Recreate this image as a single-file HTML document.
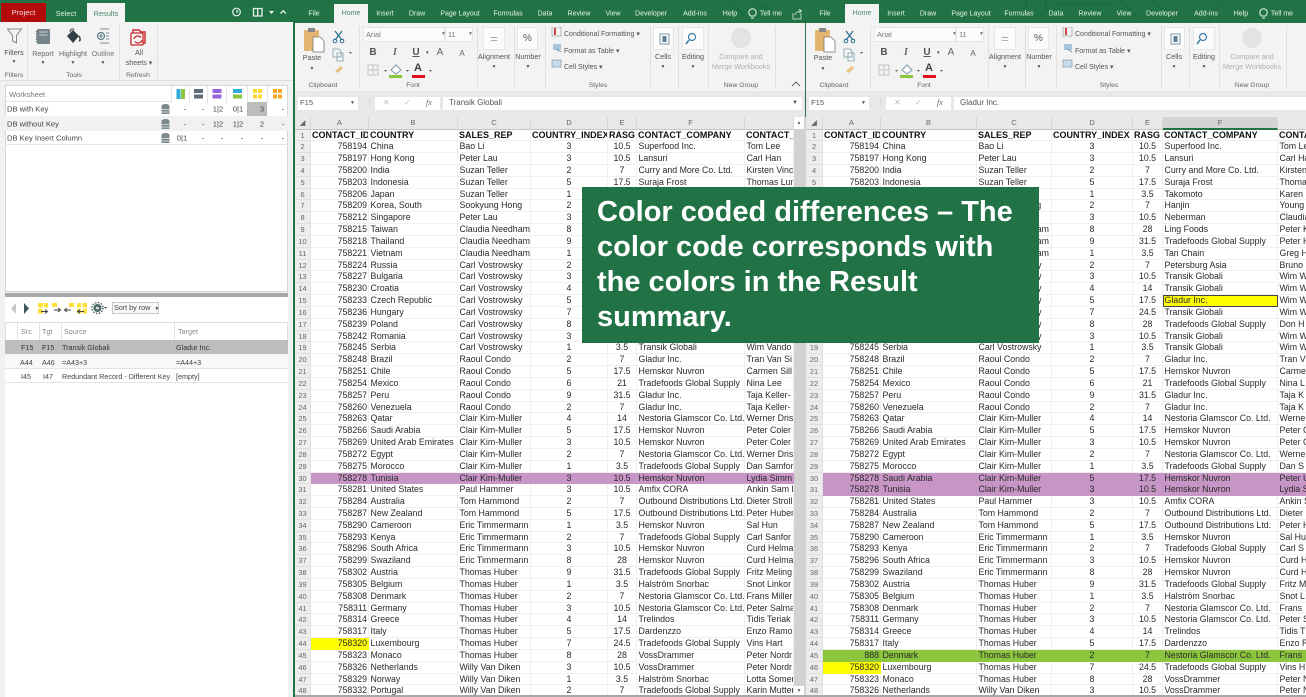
<!DOCTYPE html>
<html><head><meta charset="utf-8"><title>Compare</title>
<style>
*{box-sizing:border-box;margin:0;padding:0}
html,body{width:1306px;height:697px;overflow:hidden;background:#fff;font-family:"Liberation Sans",sans-serif;color:#333}
body{filter:blur(.35px)}
.a{position:absolute;white-space:nowrap}
.c{transform:translateX(-50%)}
#left{position:absolute;left:0;top:0;width:295px;height:697px;background:#f1f1f1;overflow:hidden;border-right:2px solid #217346}
.pane{position:absolute;top:0;height:697px;overflow:hidden;background:#e8e8e8}
.tabs{position:absolute;left:0;top:0;width:100%;height:23px;background:#217346}
.tab{position:absolute;top:14px;transform:translate(-50%,-50%);font-size:7px;color:#e6f2ea;white-space:nowrap}
.rib{position:absolute;left:0;top:23px;width:100%;height:68px;background:#f3f3f3}
.sep{position:absolute;width:1px;background:#e0e0e0}
.lbl{position:absolute;font-size:6.8px;color:#666;transform:translateX(-50%);white-space:nowrap}
.t7{position:absolute;font-size:7.2px;color:#555;transform:translateX(-50%);white-space:nowrap;line-height:10px;text-align:center}
.box{position:absolute;background:#fbfbfb;border:1px solid #e6e6e6}
.grid{position:absolute;left:0;top:117px}
.hd{display:flex;height:12.5px;background:#e8e8e8}
.hd i{font-style:normal;font-size:7.4px;color:#666;text-align:center;border-right:1px solid #d8d8d8;line-height:12px;border-bottom:1px solid #c4c4c4;flex:none}
.r{display:flex;height:11.83px;background:#fff}
.r i{font-style:normal;flex:none;font-size:8.8px;line-height:11.6px;overflow:hidden;white-space:nowrap;color:#2a2a2a;padding-left:1.5px;border-right:1px solid #f0f0f0;border-bottom:1px solid #f0f0f0}
.r i:nth-child(1){font-size:7.4px;color:#666;text-align:center;background:#ededed;border-color:#e0e0e0;padding:0}
.r i:nth-child(2){text-align:right;padding-right:1px;padding-left:0}
.r i:nth-child(5),.r i:nth-child(6){text-align:center;padding:0}
.h i:nth-child(n+2){font-weight:bold;color:#111;overflow:hidden;font-size:9px;text-align:left!important;padding-left:1px!important}
.p i:nth-child(n+2){background:#c795c6;border-color:#c795c6}
.g i:nth-child(n+2){background:#8cc63e;border-color:#8cc63e}
.r i.y{background:#ffff00;border-color:#ffff00}
.r i.ys{background:#ffff00;outline:1px solid #444;outline-offset:-1px}
#L .hd i:nth-child(1),#L .r i:nth-child(1){width:16px}
#L .hd i:nth-child(2),#L .r i:nth-child(2){width:58px}
#L .hd i:nth-child(3),#L .r i:nth-child(3){width:89px}
#L .hd i:nth-child(4),#L .r i:nth-child(4){width:73px}
#L .hd i:nth-child(5),#L .r i:nth-child(5){width:77px}
#L .hd i:nth-child(6),#L .r i:nth-child(6){width:29px}
#L .hd i:nth-child(7),#L .r i:nth-child(7){width:108px}
#L .hd i:nth-child(8),#L .r i:nth-child(8){width:49px}
#R .hd i:nth-child(1),#R .r i:nth-child(1){width:17px}
#R .hd i:nth-child(2),#R .r i:nth-child(2){width:58px}
#R .hd i:nth-child(3),#R .r i:nth-child(3){width:96px}
#R .hd i:nth-child(4),#R .r i:nth-child(4){width:75px}
#R .hd i:nth-child(5),#R .r i:nth-child(5){width:81px}
#R .hd i:nth-child(6),#R .r i:nth-child(6){width:30px}
#R .hd i:nth-child(7),#R .r i:nth-child(7){width:115px}
#R .hd i:nth-child(8),#R .r i:nth-child(8){width:40px}
#R .hd i.sel{background:#d4d4d4;border-bottom:2px solid #217346}
#banner{position:absolute;left:582px;top:187px;width:457px;height:156px;background:#217346;color:#fff;font-weight:bold;font-size:29px;line-height:35px;padding:8px 0 0 15px}
.wr{position:absolute;left:5px;width:283px;font-size:7.6px;color:#444}
.wr span{position:absolute;top:50%;transform:translate(-50%,-50%);white-space:nowrap}
.wr span.l{transform:translateY(-50%)}
.tl{position:absolute;font-size:7.2px;white-space:nowrap}
</style></head><body>

<div id="left">
<div class="a" style="left:0;top:0;width:295px;height:22px;background:#217346"></div>
<div class="a" style="left:1px;top:3px;width:45px;height:19px;background:#b30b0b;color:#f5dede;font-size:7.6px;text-align:center;line-height:20px">Project</div>
<div class="a c" style="left:66px;top:9px;font-size:7.4px;color:#dfeee5">Select</div>
<div class="a" style="left:87px;top:3px;width:38px;height:20px;background:#f3f3f3;color:#4a8a68;font-size:7.4px;text-align:center;line-height:21px">Results</div>
<svg class="a" style="left:228px;top:4px" width="66" height="16" fill="none" stroke="#e8f3ec"><circle cx="8.500" cy="8" r="3.800" stroke-width="1.200"/><path d="M8 6.500h1.500v1.500H8.500v1" stroke-width=".8"/><path d="M25.500 4.500h8.500v7.500h-8.500zM29.700 4.500v7.500" stroke-width="1.300"/><path d="M42 7.500h3l-1.500 1.700z" fill="#e8f3ec"/><path d="M52.500 9.500l2.700-2.700 2.700 2.700" stroke-width="1.300"/></svg>
<div class="a" style="left:0;top:22px;width:293px;height:59px;background:#f3f3f3;border-bottom:1px solid #ddd"></div>
<div class="sep" style="left:27px;top:24px;height:55px"></div>
<div class="sep" style="left:119px;top:24px;height:55px"></div>
<div class="sep" style="left:157px;top:24px;height:55px"></div>
<svg class="a" style="left:0;top:24px" width="160" height="24" fill="none">
<path d="M7.500 5h14l-5 6.500v7.500l-4-2v-5.500z" stroke="#7c8a8a" stroke-width="1"/>
<rect x="37" y="5" width="13" height="15" rx="1" fill="#75838a"/><path d="M39.500 8h8M39.500 11h8" stroke="#cdd5d8" stroke-width="1"/><path d="M36.500 7v11" stroke="#4d5b60" stroke-width="1" stroke-dasharray="1.500 1"/>
<path d="M67 12l6-6 6 6-6 7z" fill="#333f45"/><path d="M70 8c0-3 3-4 4-2" stroke="#333f45"/><path d="M79 12c1.500 2 1.500 5 0 5" stroke="#333f45" stroke-width="1.400"/>
<circle cx="101" cy="12" r="3.500" stroke="#5d7a85" stroke-width="1.200"/><path d="M101 10v4M99 12h4" stroke="#5d7a85"/><path d="M100 5h9M106 9h3M106 12h3M106 15h3M100 19h9" stroke="#7b8c92" stroke-width="1"/>
<path d="M133 6h6l2 2h4v11h-12z" stroke="#c8282d" stroke-width="1.400"/><rect x="131" y="9" width="12" height="12" rx="1" stroke="#c8282d" stroke-width="1.300" fill="#f6f6f6"/><path d="M134 15a4 4 0 0 1 7-1.500M142 16a4 4 0 0 1-7 1.500" stroke="#c8282d" stroke-width="1.300"/>
</svg>
<div class="t7" style="left:14px;top:48px;color:#555">Filters</div>
<div class="t7" style="left:43px;top:49px;color:#666">Report</div>
<div class="t7" style="left:73px;top:49px;color:#666">Highlight</div>
<div class="t7" style="left:103px;top:49px;color:#777">Outline</div>
<div class="t7" style="left:139px;top:48px;color:#555;line-height:10px">All<br>sheets ▾</div>
<div class="t7" style="left:14px;top:57px;font-size:5px">▼</div>
<div class="t7" style="left:43px;top:58px;font-size:5px">▼</div>
<div class="t7" style="left:73px;top:58px;font-size:5px">▼</div>
<div class="t7" style="left:103px;top:58px;font-size:5px">▼</div>
<div class="lbl" style="left:14px;top:72px">Filters</div>
<div class="lbl" style="left:74px;top:72px">Tools</div>
<div class="lbl" style="left:138px;top:72px">Refresh</div>

<div class="a" style="left:5px;top:85px;width:283px;height:207px;background:#fff;border:1px solid #d6d6d6"></div>
<div class="a" style="left:6px;top:86px;width:166px;height:16px;border-bottom:1px solid #e4e4e4"></div>
<div class="a" style="left:9px;top:90px;font-size:7.6px;color:#777">Worksheet</div>
<svg class="a" style="left:171px;top:86px" width="118" height="17">
<rect x="5.500" y="3" width="4" height="10" fill="#2eaadc"/><rect x="10" y="3" width="4" height="10" fill="#8cc63e"/>
<rect x="23" y="3" width="9" height="4" fill="#5c6b75"/><rect x="23" y="8.500" width="9" height="4" fill="#5c6b75"/>
<rect x="41.500" y="3" width="9" height="4" fill="#9466d8"/><rect x="41.500" y="8.500" width="9" height="4" fill="#9466d8"/>
<rect x="62" y="3" width="9" height="4" fill="#2eaadc"/><rect x="62" y="8.500" width="9" height="4" fill="#8cc63e"/>
<rect x="82" y="3" width="4" height="4" fill="#fdd835"/><rect x="87" y="3" width="4" height="4" fill="#fdd835"/><rect x="82" y="8.500" width="4" height="4" fill="#fdd835"/><rect x="87" y="8.500" width="4" height="4" fill="#fdd835"/>
<rect x="102" y="3" width="4" height="4" fill="#f5a623"/><rect x="107" y="3" width="4" height="4" fill="#f5a623"/><rect x="102" y="8.500" width="4" height="4" fill="#f5a623"/><rect x="107" y="8.500" width="4" height="4" fill="#f5a623"/>
<path d="M.5 0v17M18.500 0v17M36.500 0v17M55.500 0v17M76.500 0v17M96.500 0v17" stroke="#e6e6e6"/></svg>

<div class="wr" style="top:102px;height:14px"><div class="a" style="left:242px;top:0;width:20px;height:14px;background:#bdbdbd"></div><span class="l" style="left:2px">DB with Key</span><span style="left:180px">-</span><span style="left:198px">-</span><span style="left:213px">1|2</span><span style="left:233px">0|1</span><span style="left:257px">3</span><span style="left:278px">-</span></div>
<div class="wr" style="top:116px;height:15px;background:#f1f1f1"><span class="l" style="left:2px">DB without Key</span><span style="left:180px">-</span><span style="left:198px">-</span><span style="left:213px">1|2</span><span style="left:233px">1|2</span><span style="left:257px">2</span><span style="left:278px">-</span></div>
<div class="wr" style="top:131px;height:14px;border-bottom:1px solid #e6e6e6"><span class="l" style="left:2px">DB Key Insert Column</span><span style="left:177px">0|1</span><span style="left:198px">-</span><span style="left:217px">-</span><span style="left:237px">-</span><span style="left:257px">-</span><span style="left:278px">-</span></div>
<svg class="a" style="left:160px;top:103px" width="12" height="42" fill="#7c8a90"><ellipse cx="5.500" cy="3" rx="4" ry="2"/><rect x="1.500" y="3" width="8" height="8" /><path d="M1.500 6.500h8M1.500 9h8" stroke="#dfe3e5" stroke-width=".7"/><ellipse cx="5.500" cy="18" rx="4" ry="2"/><rect x="1.500" y="18" width="8" height="8"/><path d="M1.500 21.500h8M1.500 24h8" stroke="#dfe3e5" stroke-width=".7"/><ellipse cx="5.500" cy="32" rx="4" ry="2"/><rect x="1.500" y="32" width="8" height="8"/><path d="M1.500 35.500h8M1.500 38h8" stroke="#dfe3e5" stroke-width=".7"/></svg>

<div class="a" style="left:5px;top:293px;width:283px;height:4px;background:#a8a8a8"></div>
<div class="a" style="left:5px;top:297px;width:283px;height:400px;background:#fff"></div>
<svg class="a" style="left:8px;top:300px" width="84" height="16">
<path d="M8 3v11l-5-5.500z" fill="#c4c9cb"/><path d="M16 3v11l5-5.500z" fill="#3d5660"/>
<rect x="30" y="3" width="5" height="4.500" fill="#fde03a"/><rect x="30" y="9" width="5" height="4.500" fill="#fde03a"/><rect x="36" y="3" width="4" height="4.500" fill="#fde03a"/><path d="M33 11.500h6M37 9.500l2.500 2-2.500 2" stroke="#444" fill="none"/>
<rect x="44" y="3" width="5" height="4" fill="#fde03a"/><path d="M46 10h6M50 8l2.500 2-2.500 2" stroke="#444" fill="none"/>
<rect x="61" y="3" width="5" height="4" fill="#fde03a"/><path d="M57 10h6M59 8l-2.500 2 2.500 2" stroke="#444" fill="none"/>
<rect x="69" y="3" width="4" height="4.500" fill="#fde03a"/><rect x="69" y="9" width="4" height="4.500" fill="#fde03a"/><rect x="74.500" y="3" width="4.500" height="4.500" fill="#fde03a"/><rect x="74.500" y="9" width="4.500" height="4.500" fill="#fde03a"/><path d="M70 11.500h6M72 9.500l-2.500 2 2.500 2" stroke="#444" fill="none"/></svg>
<svg class="a" style="left:91px;top:300px" width="18" height="16"><circle cx="6.500" cy="8" r="4" fill="#4d6b66"/><circle cx="6.500" cy="8" r="5.500" fill="none" stroke="#4d6b66" stroke-width="1.500" stroke-dasharray="1.500 1.400"/><circle cx="6.500" cy="8" r="1.300" fill="#fff"/><path d="M13 7h3l-1.500 1.700z" fill="#444"/></svg>
<div class="a" style="left:112px;top:302px;width:47px;height:12px;border:1px solid #c9c9c9;background:#f8f8f8;font-size:7.2px;line-height:10px;padding-left:1px;color:#444">Sort by row <span style="font-size:5px;margin-left:2px">▼</span></div>

<div class="a" style="left:5px;top:322px;width:283px;height:18px;border:1px solid #dcdcdc;border-bottom:0"></div>
<div class="sep" style="left:17px;top:323px;height:17px"></div>
<div class="sep" style="left:39px;top:323px;height:17px"></div>
<div class="sep" style="left:61px;top:323px;height:17px"></div>
<div class="sep" style="left:174px;top:323px;height:17px"></div>
<div class="tl" style="left:21px;top:327px;color:#888">Src</div>
<div class="tl" style="left:42px;top:327px;color:#888">Tgt</div>
<div class="tl" style="left:64px;top:327px;color:#888">Source</div>
<div class="tl" style="left:178px;top:327px;color:#888">Target</div>
<div class="a" style="left:5px;top:340px;width:283px;height:14px;background:#bdbdbd"></div>
<div class="a" style="left:5px;top:354px;width:283px;height:15px;background:#f8f8f8;border-bottom:1px solid #e4e4e4"></div>
<div class="a" style="left:5px;top:369px;width:283px;height:14px;border-bottom:1px solid #e4e4e4"></div>
<div class="tl" style="left:21px;top:343px;color:#333">F15</div><div class="tl" style="left:42px;top:343px;color:#333">F15</div><div class="tl" style="left:62px;top:343px;color:#333">Transik Globali</div><div class="tl" style="left:176px;top:343px;color:#333">Gladur Inc.</div>
<div class="tl" style="left:20px;top:358px;color:#444">A44</div><div class="tl" style="left:42px;top:358px;color:#444">A46</div><div class="tl" style="left:62px;top:358px;color:#444">=A43+3</div><div class="tl" style="left:176px;top:358px;color:#444">=A44+3</div>
<div class="tl" style="left:21px;top:372px;color:#444">I45</div><div class="tl" style="left:43px;top:372px;color:#444">I47</div><div class="tl" style="left:62px;top:372px;color:#444">Redundant Record - Different Key</div><div class="tl" style="left:176px;top:372px;color:#444">[empty]</div>
</div>

<div class="pane" id="L" style="left:295px;width:511px">
<div class="tabs"><svg class="a" style="left:340px;top:0" width="171" height="23" fill="none" stroke="#1d6a3f" stroke-width="1.500"><circle cx="-110" cy="6" r="10"/><path d="M-110 6l-5-6M-90 4h40M95 0l20 22M120 0c10 10 20 10 30 20"/></svg>
<div class="a" style="left:39px;top:4px;width:34px;height:19px;background:#f3f3f3;color:#4a8a68;font-size:7px;text-align:center;line-height:20px">Home</div>
<span class="tab" style="left:19px">File</span><span class="tab" style="left:90px">Insert</span><span class="tab" style="left:122px">Draw</span><span class="tab" style="left:165px">Page Layout</span><span class="tab" style="left:213px">Formulas</span><span class="tab" style="left:250px">Data</span><span class="tab" style="left:284px">Review</span><span class="tab" style="left:318px">View</span><span class="tab" style="left:356px">Developer</span><span class="tab" style="left:400px">Add-ins</span><span class="tab" style="left:435px">Help</span><span class="tab" style="left:476px">Tell me</span>
<svg class="a" style="left:453px;top:8px" width="9" height="12" fill="none" stroke="#e6f2ea"><path d="M2.500 8C1 6.500.8 5.500.8 4.500a3.700 3.700 0 0 1 7.400 0c0 1-.2 2-1.700 3.500zM3 10h3"/></svg>
<svg class="a" style="left:497px;top:8px" width="12" height="12" fill="none" stroke="#b8d6c4"><path d="M1 5v6h8V5M3 7c1-3 3-4 6-4M7 1l2.500 2L7 5"/></svg></div>
<div class="rib">
<svg class="a" style="left:0;top:0" width="60" height="50" fill="none"><rect x="9" y="7" width="15" height="21" rx="1" fill="#e3b56f"/><rect x="13" y="5" width="7" height="4" fill="#888"/><path d="M18 14h7l4 4v11H18z" fill="#fff" stroke="#777" stroke-width=".8"/><path d="M40 8l7 9M47 8l-7 9" stroke="#2a6f8f" stroke-width="1.200"/><circle cx="40" cy="18" r="1.800" stroke="#2a6f8f"/><circle cx="47" cy="18" r="1.800" stroke="#2a6f8f"/><path d="M38 26h6l2 2v6h-8zM42 30h6v8h-6z" stroke="#7a9cad" fill="#f5f5f5" stroke-width=".8"/><path d="M54 29h3l-1.500 1.700z" fill="#555"/><path d="M40 48l6-5 2 2-5 5z" fill="#e8c37d"/></svg>
<div class="t7" style="left:17px;top:30px">Paste</div><div class="t7" style="left:17px;top:41px;font-size:5px">▼</div>
<div class="box" style="left:68px;top:4px;width:82px;height:15px;font-size:7.4px;line-height:13px;padding-left:2px;color:#777">Arial<span class="a" style="left:77px;top:0;font-size:5px">▼</span></div>
<div class="box" style="left:150px;top:4px;width:28px;height:15px;font-size:7.4px;line-height:13px;padding-left:2px;color:#777">11<span class="a" style="left:22px;top:0;font-size:5px">▼</span></div>
<span class="a c" style="left:78px;top:24px;font-size:10px;font-weight:bold;color:#555">B</span><span class="a c" style="left:100px;top:24px;font-size:10px;font-style:italic;font-family:'Liberation Serif',serif;font-weight:bold;color:#666">I</span><span class="a c" style="left:121px;top:24px;font-size:10px;color:#555;text-decoration:underline;font-weight:bold">U</span><span class="a" style="left:131px;top:27px;font-size:5px">▾</span><span class="a c" style="left:145px;top:24px;font-size:10px;color:#666">A</span><span class="a c" style="left:167px;top:26px;font-size:8px;color:#666">A</span>
<svg class="a" style="left:70px;top:39px" width="76" height="18" fill="none"><path d="M3 3h10v10H3zM8 3v10M3 8h10" stroke="#c5c5c5"/><path d="M19 8h3l-1.500 1.700z" fill="#555"/><path d="M26 8l5-5 5 5-5 4z" stroke="#7c9aaa" fill="#fff"/><rect x="24" y="13" width="13" height="3" fill="#8cc63e"/><path d="M41 8h3l-1.500 1.700z" fill="#555"/><rect x="47" y="13" width="13" height="3" fill="#e0101c"/><path d="M64 8h3l-1.500 1.700z" fill="#555"/></svg>
<span class="a c" style="left:123px;top:39px;font-size:11px;color:#444;font-weight:bold">A</span>
<div class="sep" style="left:64px;top:3px;height:62px"></div><div class="sep" style="left:182px;top:3px;height:62px"></div><div class="sep" style="left:219px;top:3px;height:62px"></div><div class="sep" style="left:250px;top:3px;height:62px"></div><div class="sep" style="left:355px;top:3px;height:62px"></div><div class="sep" style="left:383px;top:3px;height:62px"></div><div class="sep" style="left:413px;top:3px;height:62px"></div><div class="sep" style="left:480px;top:3px;height:62px"></div>
<div class="box" style="left:188px;top:4px;width:22px;height:23px;text-align:center;line-height:21px;font-size:13px;color:#9aa">=</div>
<div class="box" style="left:222px;top:4px;width:21px;height:23px;text-align:center;line-height:21px;font-size:10px;color:#555">%</div>
<div class="t7" style="left:199px;top:29px">Alignment</div><div class="t7" style="left:233px;top:29px">Number</div><div class="t7" style="left:199px;top:39px;font-size:5px">▼</div><div class="t7" style="left:233px;top:39px;font-size:5px">▼</div>
<svg class="a" style="left:256px;top:4px" width="12" height="50" fill="none"><rect x="1" y="0" width="9" height="9" fill="#f3f3f3" stroke="#999" stroke-width=".7"/><path d="M4 1v7" stroke="#c44" stroke-width="2"/><path d="M2 17h8v6H2z" fill="#a7c6dc"/><path d="M5 22l5 3" stroke="#6b8fa5"/><rect x="1" y="33" width="9" height="7" fill="#c8dbe8" stroke="#7d9aae" stroke-width=".7"/></svg>
<div class="a" style="left:269px;top:7px;font-size:7px;color:#555">Conditional Formatting ▾</div>
<div class="a" style="left:269px;top:24px;font-size:7px;color:#555">Format as Table ▾</div>
<div class="a" style="left:269px;top:40px;font-size:7px;color:#555">Cell Styles ▾</div>
<div class="box" style="left:358px;top:4px;width:21px;height:23px"></div><div class="box" style="left:387px;top:4px;width:22px;height:23px"></div>
<svg class="a" style="left:358px;top:4px" width="52" height="24" fill="none"><rect x="7" y="7" width="9" height="10" stroke="#7d9aae"/><rect x="9.500" y="9" width="4" height="6" fill="#5d7f96"/><circle cx="39" cy="10" r="3.500" stroke="#3a7ca5" stroke-width="1.200"/><path d="M36 13l-3 4" stroke="#3a7ca5" stroke-width="1.500"/></svg>
<div class="t7" style="left:368px;top:29px">Cells</div><div class="t7" style="left:398px;top:29px">Editing</div><div class="t7" style="left:368px;top:39px;font-size:5px">▼</div><div class="t7" style="left:398px;top:39px;font-size:5px">▼</div>
<div class="a" style="left:436px;top:5px;width:20px;height:20px;border-radius:50%;background:#e4e2e3"></div>
<div class="t7" style="left:446px;top:29px;color:#b0b0b0">Compare and<br>Merge Workbooks</div>
<div class="lbl" style="left:28px;top:59px">Clipboard</div><div class="lbl" style="left:118px;top:59px">Font</div><div class="lbl" style="left:303px;top:59px">Styles</div><div class="lbl" style="left:446px;top:59px">New Group</div>
<svg class="a" style="left:495px;top:56px" width="12" height="9" fill="none" stroke="#666"><path d="M2 7l4-4 4 4"/></svg>
</div>
<div class="box" style="left:3px;top:97px;width:60px;height:13px;font-size:7.6px;line-height:12px;padding-left:2px;color:#555;background:#fff;border:0">F15<span class="a" style="left:52px;top:0;font-size:5px">▼</span></div>
<span class="a" style="left:71px;top:98px;font-size:7px;color:#bbb">⋮</span>
<div class="box" style="left:80px;top:97px;width:65px;height:13px;background:#fff;border:0;font-size:8px;color:#bbb;line-height:12px"><span class="a" style="left:8px">✕</span><span class="a" style="left:29px">✓</span><span class="a" style="left:51px;color:#666;font-style:italic;font-family:'Liberation Serif',serif">fx</span></div>
<div class="box" style="left:148px;top:97px;width:359px;height:13px;background:#fff;border:0;font-size:8px;line-height:12px;padding-left:6px;color:#555">Transik Globali<span class="a" style="left:349px;top:0;font-size:6px">▼</span></div>
<div class="grid" id="L2" style="width:499px;overflow:hidden">
<div class="hd"><i>&#9698;</i><i>A</i><i>B</i><i>C</i><i>D</i><i>E</i><i>F</i><i>&nbsp;</i></div>
<p class="r h"><i>1</i><i>CONTACT_ID</i><i>COUNTRY</i><i>SALES_REP</i><i>COUNTRY_INDEX</i><i>RASG</i><i>CONTACT_COMPANY</i><i>CONTACT_NAME</i></p>
<p class="r"><i>2</i><i>758194</i><i>China</i><i>Bao Li</i><i>3</i><i>10.5</i><i>Superfood Inc.</i><i>Tom Lee</i></p>
<p class="r"><i>3</i><i>758197</i><i>Hong Kong</i><i>Peter Lau</i><i>3</i><i>10.5</i><i>Lansuri</i><i>Carl Han</i></p>
<p class="r"><i>4</i><i>758200</i><i>India</i><i>Suzan Teller</i><i>2</i><i>7</i><i>Curry and More Co. Ltd.</i><i>Kirsten Vinc</i></p>
<p class="r"><i>5</i><i>758203</i><i>Indonesia</i><i>Suzan Teller</i><i>5</i><i>17.5</i><i>Suraja Frost</i><i>Thomas Lun</i></p>
<p class="r"><i>6</i><i>758206</i><i>Japan</i><i>Suzan Teller</i><i>1</i><i>3.5</i><i>Takomoto</i><i>Karen</i></p>
<p class="r"><i>7</i><i>758209</i><i>Korea, South</i><i>Sookyung Hong</i><i>2</i><i>7</i><i>Hanjin</i><i>Young</i></p>
<p class="r"><i>8</i><i>758212</i><i>Singapore</i><i>Peter Lau</i><i>3</i><i>10.5</i><i>Neberman</i><i>Claudia</i></p>
<p class="r"><i>9</i><i>758215</i><i>Taiwan</i><i>Claudia Needham</i><i>8</i><i>28</i><i>Ling Foods</i><i>Peter</i></p>
<p class="r"><i>10</i><i>758218</i><i>Thailand</i><i>Claudia Needham</i><i>9</i><i>31.5</i><i>Tradefoods Global Supply</i><i>Peter</i></p>
<p class="r"><i>11</i><i>758221</i><i>Vietnam</i><i>Claudia Needham</i><i>1</i><i>3.5</i><i>Tan Chain</i><i>Greg</i></p>
<p class="r"><i>12</i><i>758224</i><i>Russia</i><i>Carl Vostrowsky</i><i>2</i><i>7</i><i>Petersburg Asia</i><i>Bruno</i></p>
<p class="r"><i>13</i><i>758227</i><i>Bulgaria</i><i>Carl Vostrowsky</i><i>3</i><i>10.5</i><i>Transik Globali</i><i>Wim</i></p>
<p class="r"><i>14</i><i>758230</i><i>Croatia</i><i>Carl Vostrowsky</i><i>4</i><i>14</i><i>Transik Globali</i><i>Wim</i></p>
<p class="r"><i>15</i><i>758233</i><i>Czech Republic</i><i>Carl Vostrowsky</i><i>5</i><i>17.5</i><i>Transik Globali</i><i>Wim</i></p>
<p class="r"><i>16</i><i>758236</i><i>Hungary</i><i>Carl Vostrowsky</i><i>7</i><i>24.5</i><i>Transik Globali</i><i>Wim</i></p>
<p class="r"><i>17</i><i>758239</i><i>Poland</i><i>Carl Vostrowsky</i><i>8</i><i>28</i><i>Tradefoods Global Supply</i><i>Don</i></p>
<p class="r"><i>18</i><i>758242</i><i>Romania</i><i>Carl Vostrowsky</i><i>3</i><i>10.5</i><i>Transik Globali</i><i>Wim</i></p>
<p class="r"><i>19</i><i>758245</i><i>Serbia</i><i>Carl Vostrowsky</i><i>1</i><i>3.5</i><i>Transik Globali</i><i>Wim Vando</i></p>
<p class="r"><i>20</i><i>758248</i><i>Brazil</i><i>Raoul Condo</i><i>2</i><i>7</i><i>Gladur Inc.</i><i>Tran Van Si</i></p>
<p class="r"><i>21</i><i>758251</i><i>Chile</i><i>Raoul Condo</i><i>5</i><i>17.5</i><i>Hemskor Nuvron</i><i>Carmen Sill</i></p>
<p class="r"><i>22</i><i>758254</i><i>Mexico</i><i>Raoul Condo</i><i>6</i><i>21</i><i>Tradefoods Global Supply</i><i>Nina Lee</i></p>
<p class="r"><i>23</i><i>758257</i><i>Peru</i><i>Raoul Condo</i><i>9</i><i>31.5</i><i>Gladur Inc.</i><i>Taja Keller-</i></p>
<p class="r"><i>24</i><i>758260</i><i>Venezuela</i><i>Raoul Condo</i><i>2</i><i>7</i><i>Gladur Inc.</i><i>Taja Keller-</i></p>
<p class="r"><i>25</i><i>758263</i><i>Qatar</i><i>Clair Kim-Muller</i><i>4</i><i>14</i><i>Nestoria Glamscor Co. Ltd.</i><i>Werner Dris</i></p>
<p class="r"><i>26</i><i>758266</i><i>Saudi Arabia</i><i>Clair Kim-Muller</i><i>5</i><i>17.5</i><i>Hemskor Nuvron</i><i>Peter Coler</i></p>
<p class="r"><i>27</i><i>758269</i><i>United Arab Emirates</i><i>Clair Kim-Muller</i><i>3</i><i>10.5</i><i>Hemskor Nuvron</i><i>Peter Coler</i></p>
<p class="r"><i>28</i><i>758272</i><i>Egypt</i><i>Clair Kim-Muller</i><i>2</i><i>7</i><i>Nestoria Glamscor Co. Ltd.</i><i>Werner Dris</i></p>
<p class="r"><i>29</i><i>758275</i><i>Morocco</i><i>Clair Kim-Muller</i><i>1</i><i>3.5</i><i>Tradefoods Global Supply</i><i>Dan Samfor</i></p>
<p class="r p"><i>30</i><i>758278</i><i>Tunisia</i><i>Clair Kim-Muller</i><i>3</i><i>10.5</i><i>Hemskor Nuvron</i><i>Lydia Simm</i></p>
<p class="r"><i>31</i><i>758281</i><i>United States</i><i>Paul Hammer</i><i>3</i><i>10.5</i><i>Amfix CORA</i><i>Ankin Sam L</i></p>
<p class="r"><i>32</i><i>758284</i><i>Australia</i><i>Tom Hammond</i><i>2</i><i>7</i><i>Outbound Distributions Ltd.</i><i>Dieter Stroll</i></p>
<p class="r"><i>33</i><i>758287</i><i>New Zealand</i><i>Tom Hammond</i><i>5</i><i>17.5</i><i>Outbound Distributions Ltd.</i><i>Peter Huber</i></p>
<p class="r"><i>34</i><i>758290</i><i>Cameroon</i><i>Eric Timmermann</i><i>1</i><i>3.5</i><i>Hemskor Nuvron</i><i>Sal Hun</i></p>
<p class="r"><i>35</i><i>758293</i><i>Kenya</i><i>Eric Timmermann</i><i>2</i><i>7</i><i>Tradefoods Global Supply</i><i>Carl Sanfor</i></p>
<p class="r"><i>36</i><i>758296</i><i>South Africa</i><i>Eric Timmermann</i><i>3</i><i>10.5</i><i>Hemskor Nuvron</i><i>Curd Helma</i></p>
<p class="r"><i>37</i><i>758299</i><i>Swaziland</i><i>Eric Timmermann</i><i>8</i><i>28</i><i>Hemskor Nuvron</i><i>Curd Helma</i></p>
<p class="r"><i>38</i><i>758302</i><i>Austria</i><i>Thomas Huber</i><i>9</i><i>31.5</i><i>Tradefoods Global Supply</i><i>Fritz Meling</i></p>
<p class="r"><i>39</i><i>758305</i><i>Belgium</i><i>Thomas Huber</i><i>1</i><i>3.5</i><i>Halström Snorbac</i><i>Snot Linkor</i></p>
<p class="r"><i>40</i><i>758308</i><i>Denmark</i><i>Thomas Huber</i><i>2</i><i>7</i><i>Nestoria Glamscor Co. Ltd.</i><i>Frans Miller</i></p>
<p class="r"><i>41</i><i>758311</i><i>Germany</i><i>Thomas Huber</i><i>3</i><i>10.5</i><i>Nestoria Glamscor Co. Ltd.</i><i>Peter Salma</i></p>
<p class="r"><i>42</i><i>758314</i><i>Greece</i><i>Thomas Huber</i><i>4</i><i>14</i><i>Trelindos</i><i>Tidis Teriak</i></p>
<p class="r"><i>43</i><i>758317</i><i>Italy</i><i>Thomas Huber</i><i>5</i><i>17.5</i><i>Dardenzzo</i><i>Enzo Ramo</i></p>
<p class="r"><i>44</i><i class="y">758320</i><i>Luxembourg</i><i>Thomas Huber</i><i>7</i><i>24.5</i><i>Tradefoods Global Supply</i><i>Vins Hart</i></p>
<p class="r"><i>45</i><i>758323</i><i>Monaco</i><i>Thomas Huber</i><i>8</i><i>28</i><i>VossDrammer</i><i>Peter Nordr</i></p>
<p class="r"><i>46</i><i>758326</i><i>Netherlands</i><i>Willy Van Diken</i><i>3</i><i>10.5</i><i>VossDrammer</i><i>Peter Nordr</i></p>
<p class="r"><i>47</i><i>758329</i><i>Norway</i><i>Willy Van Diken</i><i>1</i><i>3.5</i><i>Halström Snorbac</i><i>Lotta Somer</i></p>
<p class="r"><i>48</i><i>758332</i><i>Portugal</i><i>Willy Van Diken</i><i>2</i><i>7</i><i>Tradefoods Global Supply</i><i>Karin Mutter</i></p>
</div>
<div class="a" style="left:499px;top:117px;width:12px;height:580px;background:#d2d2d2"></div>
<div class="a" style="left:499px;top:117px;width:10px;height:12px;background:#fff;font-size:5px;color:#666;text-align:center;line-height:12px">▲</div>
<div class="a" style="left:499px;top:686px;width:10px;height:10px;background:#fff;font-size:5px;color:#666;text-align:center;line-height:10px">▼</div>
<div class="a" style="left:510px;top:0;width:1px;height:117px;background:#2f6f50"></div>
</div>

<div class="pane" id="R" style="left:806px;width:500px">
<div class="tabs"><svg class="a" style="left:0;top:0" width="500" height="23" fill="none" stroke="#1d6a3f" stroke-width="1.500"><circle cx="230" cy="6" r="10"/><path d="M250 4h60M315 0l20 22M345 0c10 10 20 10 30 20M400 22l20-22"/></svg>
<div class="a" style="left:39px;top:4px;width:34px;height:19px;background:#f3f3f3;color:#4a8a68;font-size:7px;text-align:center;line-height:20px">Home</div>
<span class="tab" style="left:19px">File</span><span class="tab" style="left:90px">Insert</span><span class="tab" style="left:122px">Draw</span><span class="tab" style="left:165px">Page Layout</span><span class="tab" style="left:213px">Formulas</span><span class="tab" style="left:250px">Data</span><span class="tab" style="left:284px">Review</span><span class="tab" style="left:318px">View</span><span class="tab" style="left:356px">Developer</span><span class="tab" style="left:400px">Add-ins</span><span class="tab" style="left:435px">Help</span><span class="tab" style="left:476px">Tell me</span>
<svg class="a" style="left:453px;top:8px" width="9" height="12" fill="none" stroke="#e6f2ea"><path d="M2.500 8C1 6.500.8 5.500.8 4.500a3.700 3.700 0 0 1 7.400 0c0 1-.2 2-1.700 3.500zM3 10h3"/></svg></div>
<div class="rib">
<svg class="a" style="left:0;top:0" width="60" height="50" fill="none"><rect x="9" y="7" width="15" height="21" rx="1" fill="#e3b56f"/><rect x="13" y="5" width="7" height="4" fill="#888"/><path d="M18 14h7l4 4v11H18z" fill="#fff" stroke="#777" stroke-width=".8"/><path d="M40 8l7 9M47 8l-7 9" stroke="#2a6f8f" stroke-width="1.200"/><circle cx="40" cy="18" r="1.800" stroke="#2a6f8f"/><circle cx="47" cy="18" r="1.800" stroke="#2a6f8f"/><path d="M38 26h6l2 2v6h-8zM42 30h6v8h-6z" stroke="#7a9cad" fill="#f5f5f5" stroke-width=".8"/><path d="M54 29h3l-1.500 1.700z" fill="#555"/><path d="M40 48l6-5 2 2-5 5z" fill="#e8c37d"/></svg>
<div class="t7" style="left:17px;top:30px">Paste</div><div class="t7" style="left:17px;top:41px;font-size:5px">▼</div>
<div class="box" style="left:68px;top:4px;width:82px;height:15px;font-size:7.4px;line-height:13px;padding-left:2px;color:#777">Arial<span class="a" style="left:77px;top:0;font-size:5px">▼</span></div>
<div class="box" style="left:150px;top:4px;width:28px;height:15px;font-size:7.4px;line-height:13px;padding-left:2px;color:#777">11<span class="a" style="left:22px;top:0;font-size:5px">▼</span></div>
<span class="a c" style="left:78px;top:24px;font-size:10px;font-weight:bold;color:#555">B</span><span class="a c" style="left:100px;top:24px;font-size:10px;font-style:italic;font-family:'Liberation Serif',serif;font-weight:bold;color:#666">I</span><span class="a c" style="left:121px;top:24px;font-size:10px;color:#555;text-decoration:underline;font-weight:bold">U</span><span class="a" style="left:131px;top:27px;font-size:5px">▾</span><span class="a c" style="left:145px;top:24px;font-size:10px;color:#666">A</span><span class="a c" style="left:167px;top:26px;font-size:8px;color:#666">A</span>
<svg class="a" style="left:70px;top:39px" width="76" height="18" fill="none"><path d="M3 3h10v10H3zM8 3v10M3 8h10" stroke="#c5c5c5"/><path d="M19 8h3l-1.500 1.700z" fill="#555"/><path d="M26 8l5-5 5 5-5 4z" stroke="#7c9aaa" fill="#fff"/><rect x="24" y="13" width="13" height="3" fill="#8cc63e"/><path d="M41 8h3l-1.500 1.700z" fill="#555"/><rect x="47" y="13" width="13" height="3" fill="#e0101c"/><path d="M64 8h3l-1.500 1.700z" fill="#555"/></svg>
<span class="a c" style="left:123px;top:39px;font-size:11px;color:#444;font-weight:bold">A</span>
<div class="sep" style="left:64px;top:3px;height:62px"></div><div class="sep" style="left:182px;top:3px;height:62px"></div><div class="sep" style="left:219px;top:3px;height:62px"></div><div class="sep" style="left:250px;top:3px;height:62px"></div><div class="sep" style="left:355px;top:3px;height:62px"></div><div class="sep" style="left:383px;top:3px;height:62px"></div><div class="sep" style="left:413px;top:3px;height:62px"></div><div class="sep" style="left:480px;top:3px;height:62px"></div>
<div class="box" style="left:188px;top:4px;width:22px;height:23px;text-align:center;line-height:21px;font-size:13px;color:#9aa">=</div>
<div class="box" style="left:222px;top:4px;width:21px;height:23px;text-align:center;line-height:21px;font-size:10px;color:#555">%</div>
<div class="t7" style="left:199px;top:29px">Alignment</div><div class="t7" style="left:233px;top:29px">Number</div><div class="t7" style="left:199px;top:39px;font-size:5px">▼</div><div class="t7" style="left:233px;top:39px;font-size:5px">▼</div>
<svg class="a" style="left:256px;top:4px" width="12" height="50" fill="none"><rect x="1" y="0" width="9" height="9" fill="#f3f3f3" stroke="#999" stroke-width=".7"/><path d="M4 1v7" stroke="#c44" stroke-width="2"/><path d="M2 17h8v6H2z" fill="#a7c6dc"/><path d="M5 22l5 3" stroke="#6b8fa5"/><rect x="1" y="33" width="9" height="7" fill="#c8dbe8" stroke="#7d9aae" stroke-width=".7"/></svg>
<div class="a" style="left:269px;top:7px;font-size:7px;color:#555">Conditional Formatting ▾</div>
<div class="a" style="left:269px;top:24px;font-size:7px;color:#555">Format as Table ▾</div>
<div class="a" style="left:269px;top:40px;font-size:7px;color:#555">Cell Styles ▾</div>
<div class="box" style="left:358px;top:4px;width:21px;height:23px"></div><div class="box" style="left:387px;top:4px;width:22px;height:23px"></div>
<svg class="a" style="left:358px;top:4px" width="52" height="24" fill="none"><rect x="7" y="7" width="9" height="10" stroke="#7d9aae"/><rect x="9.500" y="9" width="4" height="6" fill="#5d7f96"/><circle cx="39" cy="10" r="3.500" stroke="#3a7ca5" stroke-width="1.200"/><path d="M36 13l-3 4" stroke="#3a7ca5" stroke-width="1.500"/></svg>
<div class="t7" style="left:368px;top:29px">Cells</div><div class="t7" style="left:398px;top:29px">Editing</div><div class="t7" style="left:368px;top:39px;font-size:5px">▼</div><div class="t7" style="left:398px;top:39px;font-size:5px">▼</div>
<div class="a" style="left:436px;top:5px;width:20px;height:20px;border-radius:50%;background:#e4e2e3"></div>
<div class="t7" style="left:446px;top:29px;color:#b0b0b0">Compare and<br>Merge Workbooks</div>
<div class="lbl" style="left:28px;top:59px">Clipboard</div><div class="lbl" style="left:118px;top:59px">Font</div><div class="lbl" style="left:303px;top:59px">Styles</div><div class="lbl" style="left:446px;top:59px">New Group</div>
</div>
<div class="box" style="left:3px;top:97px;width:60px;height:13px;font-size:7.6px;line-height:12px;padding-left:2px;color:#555;background:#fff;border:0">F15<span class="a" style="left:52px;top:0;font-size:5px">▼</span></div>
<span class="a" style="left:71px;top:98px;font-size:7px;color:#bbb">⋮</span>
<div class="box" style="left:80px;top:97px;width:65px;height:13px;background:#fff;border:0;font-size:8px;color:#bbb;line-height:12px"><span class="a" style="left:8px">✕</span><span class="a" style="left:29px">✓</span><span class="a" style="left:51px;color:#666;font-style:italic;font-family:'Liberation Serif',serif">fx</span></div>
<div class="box" style="left:148px;top:97px;width:352px;height:13px;background:#fff;border:0;font-size:8px;line-height:12px;padding-left:6px;color:#555">Gladur Inc.</div>
<div class="grid" style="width:500px;overflow:hidden">
<div class="hd"><i>&#9698;</i><i>A</i><i>B</i><i>C</i><i>D</i><i>E</i><i class="sel">F</i><i>&nbsp;</i></div>
<p class="r h"><i>1</i><i>CONTACT_ID</i><i>COUNTRY</i><i>SALES_REP</i><i>COUNTRY_INDEX</i><i>RASG</i><i>CONTACT_COMPANY</i><i>CONTACT_NAME</i></p>
<p class="r"><i>2</i><i>758194</i><i>China</i><i>Bao Li</i><i>3</i><i>10.5</i><i>Superfood Inc.</i><i>Tom Lee</i></p>
<p class="r"><i>3</i><i>758197</i><i>Hong Kong</i><i>Peter Lau</i><i>3</i><i>10.5</i><i>Lansuri</i><i>Carl Han</i></p>
<p class="r"><i>4</i><i>758200</i><i>India</i><i>Suzan Teller</i><i>2</i><i>7</i><i>Curry and More Co. Ltd.</i><i>Kirsten Vinc</i></p>
<p class="r"><i>5</i><i>758203</i><i>Indonesia</i><i>Suzan Teller</i><i>5</i><i>17.5</i><i>Suraja Frost</i><i>Thomas Lun</i></p>
<p class="r"><i>6</i><i>758206</i><i>Japan</i><i>Suzan Teller</i><i>1</i><i>3.5</i><i>Takomoto</i><i>Karen</i></p>
<p class="r"><i>7</i><i>758209</i><i>Korea, South</i><i>Sookyung Hong</i><i>2</i><i>7</i><i>Hanjin</i><i>Young</i></p>
<p class="r"><i>8</i><i>758212</i><i>Singapore</i><i>Peter Lau</i><i>3</i><i>10.5</i><i>Neberman</i><i>Claudia</i></p>
<p class="r"><i>9</i><i>758215</i><i>Taiwan</i><i>Claudia Needham</i><i>8</i><i>28</i><i>Ling Foods</i><i>Peter K</i></p>
<p class="r"><i>10</i><i>758218</i><i>Thailand</i><i>Claudia Needham</i><i>9</i><i>31.5</i><i>Tradefoods Global Supply</i><i>Peter H</i></p>
<p class="r"><i>11</i><i>758221</i><i>Vietnam</i><i>Claudia Needham</i><i>1</i><i>3.5</i><i>Tan Chain</i><i>Greg H</i></p>
<p class="r"><i>12</i><i>758224</i><i>Russia</i><i>Carl Vostrowsky</i><i>2</i><i>7</i><i>Petersburg Asia</i><i>Bruno</i></p>
<p class="r"><i>13</i><i>758227</i><i>Bulgaria</i><i>Carl Vostrowsky</i><i>3</i><i>10.5</i><i>Transik Globali</i><i>Wim W</i></p>
<p class="r"><i>14</i><i>758230</i><i>Croatia</i><i>Carl Vostrowsky</i><i>4</i><i>14</i><i>Transik Globali</i><i>Wim W</i></p>
<p class="r"><i>15</i><i>758233</i><i>Czech Republic</i><i>Carl Vostrowsky</i><i>5</i><i>17.5</i><i class="ys">Gladur Inc.</i><i>Wim W</i></p>
<p class="r"><i>16</i><i>758236</i><i>Hungary</i><i>Carl Vostrowsky</i><i>7</i><i>24.5</i><i>Transik Globali</i><i>Wim W</i></p>
<p class="r"><i>17</i><i>758239</i><i>Poland</i><i>Carl Vostrowsky</i><i>8</i><i>28</i><i>Tradefoods Global Supply</i><i>Don H</i></p>
<p class="r"><i>18</i><i>758242</i><i>Romania</i><i>Carl Vostrowsky</i><i>3</i><i>10.5</i><i>Transik Globali</i><i>Wim W</i></p>
<p class="r"><i>19</i><i>758245</i><i>Serbia</i><i>Carl Vostrowsky</i><i>1</i><i>3.5</i><i>Transik Globali</i><i>Wim W</i></p>
<p class="r"><i>20</i><i>758248</i><i>Brazil</i><i>Raoul Condo</i><i>2</i><i>7</i><i>Gladur Inc.</i><i>Tran V</i></p>
<p class="r"><i>21</i><i>758251</i><i>Chile</i><i>Raoul Condo</i><i>5</i><i>17.5</i><i>Hemskor Nuvron</i><i>Carme</i></p>
<p class="r"><i>22</i><i>758254</i><i>Mexico</i><i>Raoul Condo</i><i>6</i><i>21</i><i>Tradefoods Global Supply</i><i>Nina L</i></p>
<p class="r"><i>23</i><i>758257</i><i>Peru</i><i>Raoul Condo</i><i>9</i><i>31.5</i><i>Gladur Inc.</i><i>Taja K</i></p>
<p class="r"><i>24</i><i>758260</i><i>Venezuela</i><i>Raoul Condo</i><i>2</i><i>7</i><i>Gladur Inc.</i><i>Taja K</i></p>
<p class="r"><i>25</i><i>758263</i><i>Qatar</i><i>Clair Kim-Muller</i><i>4</i><i>14</i><i>Nestoria Glamscor Co. Ltd.</i><i>Werne</i></p>
<p class="r"><i>26</i><i>758266</i><i>Saudi Arabia</i><i>Clair Kim-Muller</i><i>5</i><i>17.5</i><i>Hemskor Nuvron</i><i>Peter C</i></p>
<p class="r"><i>27</i><i>758269</i><i>United Arab Emirates</i><i>Clair Kim-Muller</i><i>3</i><i>10.5</i><i>Hemskor Nuvron</i><i>Peter C</i></p>
<p class="r"><i>28</i><i>758272</i><i>Egypt</i><i>Clair Kim-Muller</i><i>2</i><i>7</i><i>Nestoria Glamscor Co. Ltd.</i><i>Werne</i></p>
<p class="r"><i>29</i><i>758275</i><i>Morocco</i><i>Clair Kim-Muller</i><i>1</i><i>3.5</i><i>Tradefoods Global Supply</i><i>Dan S</i></p>
<p class="r p"><i>30</i><i>758278</i><i>Saudi Arabia</i><i>Clair Kim-Muller</i><i>5</i><i>17.5</i><i>Hemskor Nuvron</i><i>Peter U</i></p>
<p class="r p"><i>31</i><i>758278</i><i>Tunisia</i><i>Clair Kim-Muller</i><i>3</i><i>10.5</i><i>Hemskor Nuvron</i><i>Lydia S</i></p>
<p class="r"><i>32</i><i>758281</i><i>United States</i><i>Paul Hammer</i><i>3</i><i>10.5</i><i>Amfix CORA</i><i>Ankin S</i></p>
<p class="r"><i>33</i><i>758284</i><i>Australia</i><i>Tom Hammond</i><i>2</i><i>7</i><i>Outbound Distributions Ltd.</i><i>Dieter</i></p>
<p class="r"><i>34</i><i>758287</i><i>New Zealand</i><i>Tom Hammond</i><i>5</i><i>17.5</i><i>Outbound Distributions Ltd.</i><i>Peter H</i></p>
<p class="r"><i>35</i><i>758290</i><i>Cameroon</i><i>Eric Timmermann</i><i>1</i><i>3.5</i><i>Hemskor Nuvron</i><i>Sal Hu</i></p>
<p class="r"><i>36</i><i>758293</i><i>Kenya</i><i>Eric Timmermann</i><i>2</i><i>7</i><i>Tradefoods Global Supply</i><i>Carl S</i></p>
<p class="r"><i>37</i><i>758296</i><i>South Africa</i><i>Eric Timmermann</i><i>3</i><i>10.5</i><i>Hemskor Nuvron</i><i>Curd H</i></p>
<p class="r"><i>38</i><i>758299</i><i>Swaziland</i><i>Eric Timmermann</i><i>8</i><i>28</i><i>Hemskor Nuvron</i><i>Curd H</i></p>
<p class="r"><i>39</i><i>758302</i><i>Austria</i><i>Thomas Huber</i><i>9</i><i>31.5</i><i>Tradefoods Global Supply</i><i>Fritz M</i></p>
<p class="r"><i>40</i><i>758305</i><i>Belgium</i><i>Thomas Huber</i><i>1</i><i>3.5</i><i>Halström Snorbac</i><i>Snot L</i></p>
<p class="r"><i>41</i><i>758308</i><i>Denmark</i><i>Thomas Huber</i><i>2</i><i>7</i><i>Nestoria Glamscor Co. Ltd.</i><i>Frans</i></p>
<p class="r"><i>42</i><i>758311</i><i>Germany</i><i>Thomas Huber</i><i>3</i><i>10.5</i><i>Nestoria Glamscor Co. Ltd.</i><i>Peter S</i></p>
<p class="r"><i>43</i><i>758314</i><i>Greece</i><i>Thomas Huber</i><i>4</i><i>14</i><i>Trelindos</i><i>Tidis T</i></p>
<p class="r"><i>44</i><i>758317</i><i>Italy</i><i>Thomas Huber</i><i>5</i><i>17.5</i><i>Dardenzzo</i><i>Enzo R</i></p>
<p class="r g"><i>45</i><i>888</i><i>Denmark</i><i>Thomas Huber</i><i>2</i><i>7</i><i>Nestoria Glamscor Co. Ltd.</i><i>Frans</i></p>
<p class="r"><i>46</i><i class="y">758320</i><i>Luxembourg</i><i>Thomas Huber</i><i>7</i><i>24.5</i><i>Tradefoods Global Supply</i><i>Vins H</i></p>
<p class="r"><i>47</i><i>758323</i><i>Monaco</i><i>Thomas Huber</i><i>8</i><i>28</i><i>VossDrammer</i><i>Peter N</i></p>
<p class="r"><i>48</i><i>758326</i><i>Netherlands</i><i>Willy Van Diken</i><i>3</i><i>10.5</i><i>VossDrammer</i><i>Peter N</i></p>
</div>
</div>

<div class="a" style="left:295px;top:695px;width:1011px;height:2px;background:#a8a8a8"></div>
<div id="banner">Color coded differences – The<br>color code corresponds with<br>the colors in the Result<br>summary.</div>
</body></html>
